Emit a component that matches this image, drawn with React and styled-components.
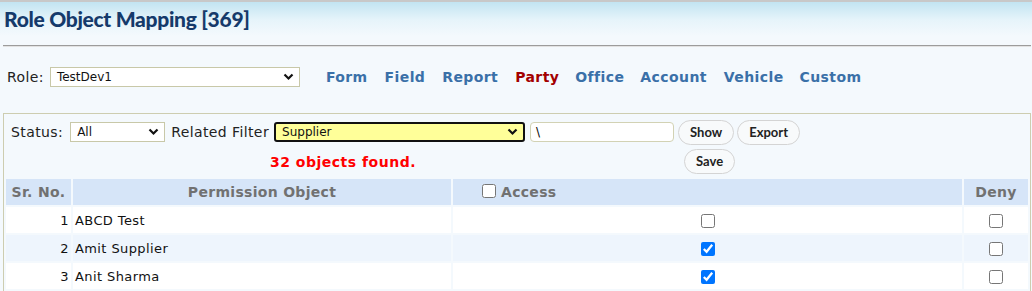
import React from "react"
import styled, { createGlobalStyle } from "styled-components"

const GlobalStyle = createGlobalStyle`
  body {
    margin: 0;
    background: #f4f9fd;
    font-family: "DejaVu Sans", Verdana, sans-serif;
    overflow: hidden;
  }
`

const Header = styled.div`
  height: 43px;
  border-top: 2px solid #c8c8c8;
  background: linear-gradient(to bottom, #c2e4f1 0px, #e6f4fa 18px, #f4f9fd 34px);
  padding-left: 4px;
`

const Title = styled.h1`
  margin: 0;
  padding-top: 4px;
  font-family: Lato, "Open Sans", sans-serif;
  font-weight: 900;
  font-size: 21px;
  line-height: 26px;
  color: #153a6b;
  letter-spacing: -0.3px;
`

const Rule = styled.div`
  margin: 0 1px 0 3px;
  height: 1px;
  background: #9c9c9c;
  border-bottom: 1px solid #e2e2e2;
`

const RoleRow = styled.div`
  display: flex;
  align-items: center;
  margin-top: 20px;
  padding-left: 7px;
  height: 20px;
`

const Label = styled.span`
  font-size: 14px;
  letter-spacing: 0.4px;
  color: #222;
  margin-right: ${p => p.$gap || 4}px;
`

const Select = styled.div`
  box-sizing: border-box;
  width: ${p => p.$w}px;
  height: ${p => p.$h || 20}px;
  display: flex;
  align-items: center;
  justify-content: space-between;
  padding: 0 5px 0 6px;
  background: ${p => (p.$highlight ? "#ffff99" : "#fff")};
  border: ${p => (p.$highlight ? "2px solid #111" : "1px solid #c8c8a8")};
  border-radius: ${p => (p.$highlight ? 3 : 0)}px;
  font-family: "DejaVu Sans", Verdana, sans-serif;
  font-size: 12px;
  color: #111;
  margin-right: ${p => p.$mr || 0}px;
`

const Chevron = () => (
  <svg width="11" height="8" viewBox="0 0 11 8">
    <path d="M1.5 1.5 L5.5 5.5 L9.5 1.5" fill="none" stroke="#111" strokeWidth="2.2" />
  </svg>
)

const Nav = styled.nav`
  display: flex;
  margin-left: 26px;
`

const NavLink = styled.a`
  font-family: "DejaVu Sans", Verdana, sans-serif;
  font-weight: 700;
  font-size: 14px;
  letter-spacing: 0.4px;
  color: ${p => (p.$active ? "#a30000" : "#3a70a8")};
  text-decoration: none;
  margin-right: ${p => p.$mr}px;
`

const Panel = styled.div`
  margin: 26px 1px 0 3px;
  border: 1px solid #cdcdb0;
  padding-top: 6px;
`

const FilterRow = styled.div`
  display: flex;
  align-items: center;
  padding-left: 7px;
  height: 24px;
`

const TextBox = styled.div`
  box-sizing: border-box;
  width: 144px;
  height: 20px;
  background: #fff;
  border: 1px solid #d2d2b4;
  border-radius: 4px;
  padding-left: 5px;
  font-size: 12px;
  line-height: 18px;
  margin-left: 5px;
  margin-right: 4px;
`

const Button = styled.button`
  box-sizing: border-box;
  height: 25px;
  padding: 0 11px;
  border: 1px solid #d4d4d4;
  border-radius: 13px;
  background: #f8fafb;
  font-family: Lato, "Open Sans", sans-serif;
  font-weight: 700;
  font-size: 13px;
  color: #222;
  margin-right: 3px;
`

const StatusRow = styled.div`
  display: flex;
  align-items: center;
  height: 28px;
  margin-top: 3px;
`

const Found = styled.span`
  font-weight: 700;
  font-size: 14px;
  letter-spacing: 0.5px;
  color: #ff0000;
  margin-left: 266px;
  width: 414px;
  padding-top: 2px;
`

const Table = styled.table`
  width: 100%;
  border-collapse: separate;
  border-spacing: 2px;
  margin-top: 2px;
`

const Th = styled.th`
  background: #d6e5f8;
  color: #717171;
  font-size: 14px;
  letter-spacing: 0.3px;
  font-weight: 700;
  height: 26px;
  padding: 0;
  text-align: ${p => p.$align || "center"};
  padding-left: ${p => p.$pl || 0}px;
  width: ${p => (p.$w ? `${p.$w}px` : "auto")};
`

const Tr = styled.tr`
  background: ${p => (p.$alt ? "#eef5fd" : "#fff")};
`

const Td = styled.td`
  height: 26px;
  padding: 0 2px;
  font-size: 13px;
  letter-spacing: 0.4px;
  color: #111;
  text-align: ${p => p.$align || "left"};
`

const Check = styled.input`
  margin: 0;
  width: 14px;
  height: 14px;
  vertical-align: middle;
`

const HeadCheck = styled(Check)`
  margin-right: 5px;
  vertical-align: -1px;
`

const links = [
  { name: "Form", mr: 17 },
  { name: "Field", mr: 17 },
  { name: "Report", mr: 17 },
  { name: "Party", mr: 16 },
  { name: "Office", mr: 16 },
  { name: "Account", mr: 17 },
  { name: "Vehicle", mr: 16 },
  { name: "Custom", mr: 0 },
].map(l => ({ ...l, active: l.name === "Party" }))

const rows = [
  { no: 1, name: "ABCD Test", access: false },
  { no: 2, name: "Amit Supplier", access: true },
  { no: 3, name: "Anit Sharma", access: true },
]

export default function App() {
  return (
    <>
      <GlobalStyle />
      <Header>
        <Title>Role Object Mapping [369]</Title>
      </Header>
      <Rule />

      <RoleRow>
        <Label $gap={6}>Role:</Label>
        <Select $w={250}>
          <span>TestDev1</span>
          <Chevron />
        </Select>
        <Nav>
          {links.map(l => (
            <NavLink key={l.name} href="#" $active={l.active} $mr={l.mr}>
              {l.name}
            </NavLink>
          ))}
        </Nav>
      </RoleRow>

      <Panel>
        <FilterRow>
          <Label $gap={7}>Status:</Label>
          <Select $w={95} $mr={6}>
            <span>All</span>
            <Chevron />
          </Select>
          <Label $gap={5}>Related Filter</Label>
          <Select $w={251} $highlight>
            <span>Supplier</span>
            <Chevron />
          </Select>
          <TextBox>\</TextBox>
          <Button>Show</Button>
          <Button>Export</Button>
        </FilterRow>
        <StatusRow>
          <Found>32 objects found.</Found>
          <Button>Save</Button>
        </StatusRow>

        <Table>
          <thead>
            <tr>
              <Th $w={65}>Sr. No.</Th>
              <Th $w={378}>Permission Object</Th>
              <Th $align="left" $pl={29}>
                <HeadCheck type="checkbox" readOnly />
                Access
              </Th>
              <Th $w={64}>Deny</Th>
            </tr>
          </thead>
          <tbody>
            {rows.map((r, i) => (
              <Tr key={r.no} $alt={i % 2 === 1}>
                <Td $align="right">{r.no}</Td>
                <Td>{r.name}</Td>
                <Td $align="center">
                  <Check type="checkbox" checked={r.access} readOnly />
                </Td>
                <Td $align="center">
                  <Check type="checkbox" checked={false} readOnly />
                </Td>
              </Tr>
            ))}
          </tbody>
        </Table>
      </Panel>
    </>
  )
}
